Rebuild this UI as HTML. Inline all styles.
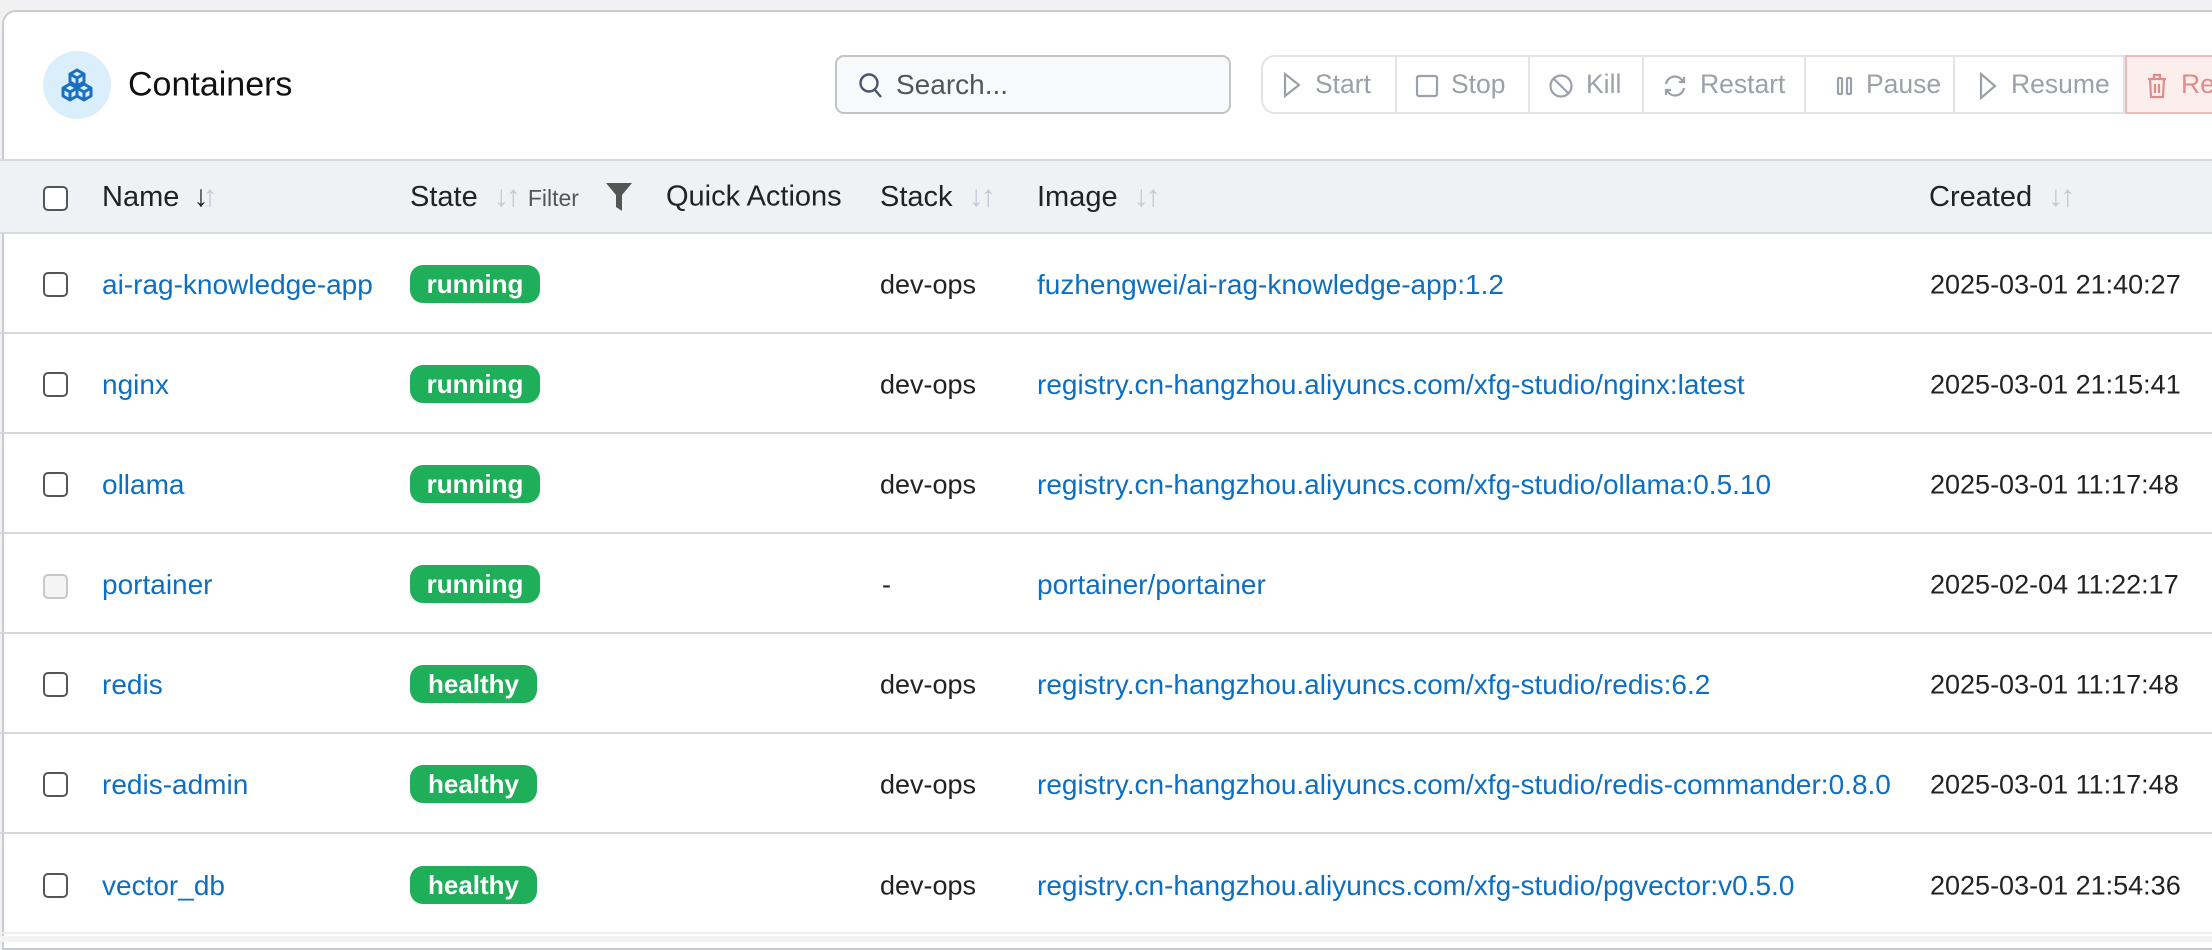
<!DOCTYPE html>
<html><head><meta charset="utf-8"><style>
*{box-sizing:border-box;margin:0;padding:0}
body{width:2212px;height:942px;overflow:hidden;background:#f1f1f1;font-family:"Liberation Sans",sans-serif;position:relative}
.card{position:absolute;left:2px;top:10px;width:2240px;height:940px;background:#fff;border:2px solid #c9cbd3;border-radius:14px 0 0 0}
.a{position:absolute}
.hdr{position:absolute;left:0;top:159px;width:2212px;height:75px;background:#f0f1f5;border-top:2px solid #d8d9de;border-bottom:2px solid #d8d9de}
.row{position:absolute;left:0;width:2212px;height:100px;border-bottom:2px solid #d6d7db}
.ht{position:absolute;top:197px;transform:translateY(-50%);font-size:29px;color:#222;white-space:nowrap}
.s{color:#c5c9d3;font-size:30px;letter-spacing:-3px;margin-left:8px}
.cb{position:absolute;left:43px;width:25px;height:25px;border:2px solid #555;border-radius:5px;background:#fff}
.t{position:absolute;font-size:28px;white-space:nowrap;transform:translateY(-50%)}
.lk{color:#0e6fc0}
.dk{color:#222;font-size:27px}
.bd{position:absolute;left:410px;height:38px;border-radius:13px;background:#1fae5a;color:#fff;font-weight:bold;font-size:26px;line-height:38px;text-align:center;transform:translateY(-50%)}
.btn{position:absolute;top:55px;height:59px;border:2px solid #e2e4ea;border-left:none;color:#9ca0a8;font-size:26.5px;display:flex;align-items:center;padding-left:18px;gap:12px;background:#fff;white-space:nowrap;overflow:hidden}
.btn svg{stroke:#9ca0a8;fill:none;stroke-width:2.2;flex:none}
</style></head><body>
<div class="card"></div>
<div class="a" style="left:43px;top:51px;width:68px;height:68px;border-radius:50%;background:#dbeefc"></div>
<svg class="a" style="left:60px;top:67px" width="34" height="36" viewBox="0 0 34 36" fill="none" stroke="#1a6fc0" stroke-width="3" stroke-linejoin="round"><path d="M17 3l7 4v8l-7 4-7-4V7z M10 7l7 4 7-4 M17 11v8"/><path d="M10 17l7 4v8l-7 4-7-4v-8z M3 21l7 4 7-4 M10 25v8"/><path d="M24 17l7 4v8l-7 4-7-4v-8z M17 21l7 4 7-4 M24 25v8"/></svg>
<div class="a" style="left:128px;top:85px;transform:translateY(-50%);font-size:34px;color:#111">Containers</div>
<div class="a" style="left:835px;top:55px;width:396px;height:59px;border:2px solid #c4c4c4;border-radius:9px;background:#f8f9fb"></div>
<svg class="a" style="left:858px;top:72px" width="26" height="28" viewBox="0 0 26 28" fill="none" stroke="#4a5570" stroke-width="2.4"><circle cx="11" cy="11" r="8.5"/><path d="M17 18l6 7"/></svg>
<div class="a" style="left:896px;top:85px;transform:translateY(-50%);font-size:28px;color:#555">Search...</div>
<div class="btn" style="left:1261px;width:136px;border-left:2px solid #e2e4ea;border-radius:14px 0 0 14px"><svg width="22" height="28" viewBox="0 0 22 28"><path d="M4 3l14 11-14 11z"/></svg>Start</div>
<div class="btn" style="left:1397px;width:133px"><svg width="24" height="26" viewBox="0 0 24 26"><rect x="2" y="4" width="20" height="20" rx="2"/></svg>Stop</div>
<div class="btn" style="left:1530px;width:114px"><svg width="26" height="28" viewBox="0 0 26 28"><circle cx="13" cy="15" r="10.5"/><path d="M6 8l14 14"/></svg>Kill</div>
<div class="btn" style="left:1644px;width:162px"><svg width="26" height="28" viewBox="0 0 26 28"><path d="M4 13a9 9 0 0 1 16-4l2 2M22 6v5h-5M22 17a9 9 0 0 1-16 4l-2-2M4 24v-5h5"/></svg>Restart</div>
<div class="btn" style="left:1806px;width:149px;padding-left:30px"><svg width="18" height="26" viewBox="0 0 18 26"><rect x="2" y="6" width="4" height="16" rx="1"/><rect x="11" y="6" width="4" height="16" rx="1"/></svg>Pause</div>
<div class="btn" style="left:1955px;width:170px;padding-left:22px"><svg width="22" height="30" viewBox="0 0 22 30"><path d="M4 4l14 12-14 12z"/></svg>Resume</div>
<div class="btn" style="left:2125px;width:120px;background:#fdeeee;border-color:#f2b9b9;border-left:2px solid #f2b9b9;color:#e08a8a"><svg width="24" height="30" viewBox="0 0 24 30" style="stroke:#e08a8a"><path d="M3 9h18M9 9V5h6v4M5 9l1 18h12l1-18M10 14v9M14 14v9"/></svg>Re</div>

<div class="hdr"></div>
<div class="cb" style="top:186px"></div>
<div class="ht" style="left:102px">Name <span style="color:#222;font-size:30px;margin-left:6px">↓</span><span style="color:#c5c9d3;font-size:30px;margin-left:-6px">↑</span></div>
<div class="ht" style="left:410px">State <span class="s">↓↑</span> <span style="font-size:23px;color:#555;margin-left:2px">Filter</span></div>
<svg class="a" style="left:605px;top:182px" width="28" height="30" viewBox="0 0 28 30"><path d="M1 1h26l-10 12v16l-6-4V13z" fill="#555"/></svg>
<div class="ht" style="left:666px">Quick Actions</div>
<div class="ht" style="left:880px">Stack <span class="s">↓↑</span></div>
<div class="ht" style="left:1037px">Image <span class="s">↓↑</span></div>
<div class="ht" style="left:1929px">Created <span class="s">↓↑</span></div>

<div class="row" style="top:234px"></div>
<div class="row" style="top:334px"></div>
<div class="row" style="top:434px"></div>
<div class="row" style="top:534px"></div>
<div class="row" style="top:634px"></div>
<div class="row" style="top:734px"></div>
<div class="row" style="top:834px;border-bottom-color:#eee"></div>
<div class="a" style="left:0;top:936px;width:2212px;height:6px;background:#f3f3f3"></div>

<div class="cb" style="top:272px"></div><div class="t lk" style="left:102px;top:285px">ai-rag-knowledge-app</div><div class="bd" style="top:284px;width:130px">running</div><div class="t dk" style="left:880px;top:285px">dev-ops</div><div class="t lk" style="left:1037px;top:285px">fuzhengwei/ai-rag-knowledge-app:1.2</div><div class="t dk" style="left:1930px;top:285px">2025-03-01 21:40:27</div>
<div class="cb" style="top:372px"></div><div class="t lk" style="left:102px;top:385px">nginx</div><div class="bd" style="top:384px;width:130px">running</div><div class="t dk" style="left:880px;top:385px">dev-ops</div><div class="t lk" style="left:1037px;top:385px">registry.cn-hangzhou.aliyuncs.com/xfg-studio/nginx:latest</div><div class="t dk" style="left:1930px;top:385px">2025-03-01 21:15:41</div>
<div class="cb" style="top:472px"></div><div class="t lk" style="left:102px;top:485px">ollama</div><div class="bd" style="top:484px;width:130px">running</div><div class="t dk" style="left:880px;top:485px">dev-ops</div><div class="t lk" style="left:1037px;top:485px">registry.cn-hangzhou.aliyuncs.com/xfg-studio/ollama:0.5.10</div><div class="t dk" style="left:1930px;top:485px">2025-03-01 11:17:48</div>
<div class="cb" style="top:574px;border-color:#c8c8c8;background:#f4f4f4"></div><div class="t lk" style="left:102px;top:585px">portainer</div><div class="bd" style="top:584px;width:130px">running</div><div class="t dk" style="left:882px;top:585px">-</div><div class="t lk" style="left:1037px;top:585px">portainer/portainer</div><div class="t dk" style="left:1930px;top:585px">2025-02-04 11:22:17</div>
<div class="cb" style="top:672px"></div><div class="t lk" style="left:102px;top:685px">redis</div><div class="bd" style="top:684px;width:127px">healthy</div><div class="t dk" style="left:880px;top:685px">dev-ops</div><div class="t lk" style="left:1037px;top:685px">registry.cn-hangzhou.aliyuncs.com/xfg-studio/redis:6.2</div><div class="t dk" style="left:1930px;top:685px">2025-03-01 11:17:48</div>
<div class="cb" style="top:772px"></div><div class="t lk" style="left:102px;top:785px">redis-admin</div><div class="bd" style="top:784px;width:127px">healthy</div><div class="t dk" style="left:880px;top:785px">dev-ops</div><div class="t lk" style="left:1037px;top:785px">registry.cn-hangzhou.aliyuncs.com/xfg-studio/redis-commander:0.8.0</div><div class="t dk" style="left:1930px;top:785px">2025-03-01 11:17:48</div>
<div class="cb" style="top:873px"></div><div class="t lk" style="left:102px;top:886px">vector_db</div><div class="bd" style="top:885px;width:127px">healthy</div><div class="t dk" style="left:880px;top:886px">dev-ops</div><div class="t lk" style="left:1037px;top:886px">registry.cn-hangzhou.aliyuncs.com/xfg-studio/pgvector:v0.5.0</div><div class="t dk" style="left:1930px;top:886px">2025-03-01 21:54:36</div>
</body></html>
